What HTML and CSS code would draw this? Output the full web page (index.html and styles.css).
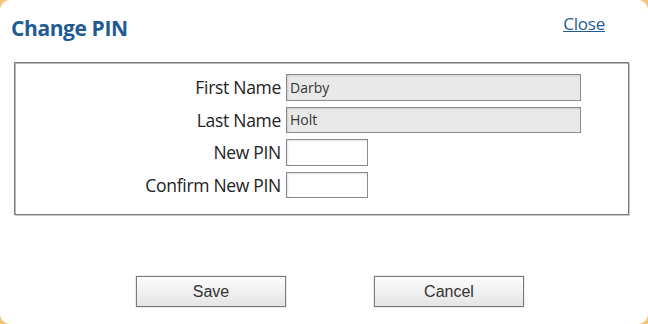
FILE: index.html
```html
<!DOCTYPE html>
<html lang="en">
<head>
    <meta charset="UTF-8">
    <title>Change PIN</title>
    <link rel="stylesheet" href="styles.css">
</head>
<body>
    <div class="dialog">
        <!-- Header -->
        <div class="dialog-header">
            <h2 class="dialog-title">Change PIN</h2>
            <a href="#" class="close-link">Close</a>
        </div>

        <!-- Form -->
        <div class="form-box">
            <div class="form-grid">
                <label for="firstName">First Name</label>
                <input type="text" id="firstName" class="field field-wide" value="Darby" readonly>

                <label for="lastName">Last Name</label>
                <input type="text" id="lastName" class="field field-wide" value="Holt" readonly>

                <label for="newPin">New PIN</label>
                <input type="password" id="newPin" class="field field-pin">

                <label for="confirmPin">Confirm New PIN</label>
                <input type="password" id="confirmPin" class="field field-pin">
            </div>
        </div>

        <!-- Buttons -->
        <div class="button-row">
            <button type="button" class="btn">Save</button>
            <button type="button" class="btn">Cancel</button>
        </div>
    </div>
</body>
</html>
```

FILE: styles.css
```css
* {
    margin: 0;
    padding: 0;
    box-sizing: border-box;
}

body {
    background-color: #f3c47a;
    width: 648px;
    height: 324px;
    overflow: hidden;
    font-family: 'Open Sans', 'Noto Sans', sans-serif;
}

.dialog {
    background-color: white;
    width: 648px;
    height: 324px;
    border-radius: 10px;
    padding: 0 0 0 14px;
}

.dialog-header {
    display: flex;
    justify-content: space-between;
    align-items: flex-start;
    height: 62px;
    padding-right: 43px;
}

.dialog-title {
    font-size: 21px;
    font-weight: 700;
    color: #1f5b94;
    margin-left: -3px;
    padding-top: 14px;
    letter-spacing: -0.4px;
}

.close-link {
    font-size: 17px;
    color: #1f5b94;
    text-decoration: underline;
    padding-top: 12px;
    letter-spacing: -0.2px;
}

.form-box {
    width: 615px;
    height: 153px;
    border: 1px solid #7d7d7d;
    box-shadow: inset 1px 1px 0 #b9b9b9, 1px 1px 0 #c9c9c9;
    padding-top: 11px;
}

.form-grid {
    display: grid;
    grid-template-columns: 266px auto;
    grid-auto-rows: 26.5px;
    column-gap: 5px;
    row-gap: 6px;
    align-items: center;
}

.form-grid label {
    text-align: right;
    font-size: 17.5px;
    line-height: 22px;
    color: #222;
    letter-spacing: -0.3px;
}

.field {
    height: 26.5px;
    border: 1px solid #8a8a8a;
    box-shadow: inset 1px 1px 2px rgba(0, 0, 0, 0.12);
    font-family: 'Open Sans', 'Noto Sans', sans-serif;
    font-size: 14px;
    color: #333;
    padding: 0 3px;
    outline: none;
}

.field-wide {
    width: 295px;
    background-color: #e9e9e9;
}

.field-pin {
    width: 82px;
    background-color: white;
}

.button-row {
    display: flex;
    gap: 88px;
    padding-left: 122px;
    margin-top: 61px;
}

.btn {
    width: 150px;
    height: 31px;
    background: linear-gradient(to bottom, #fdfdfd 0%, #e4e4e4 100%);
    border: 1px solid #7a7a7a;
    box-shadow: 0 0 0 1px #ececec;
    font-family: 'Liberation Sans', Arial, sans-serif;
    font-size: 16px;
    color: #333;
    cursor: pointer;
}
```
